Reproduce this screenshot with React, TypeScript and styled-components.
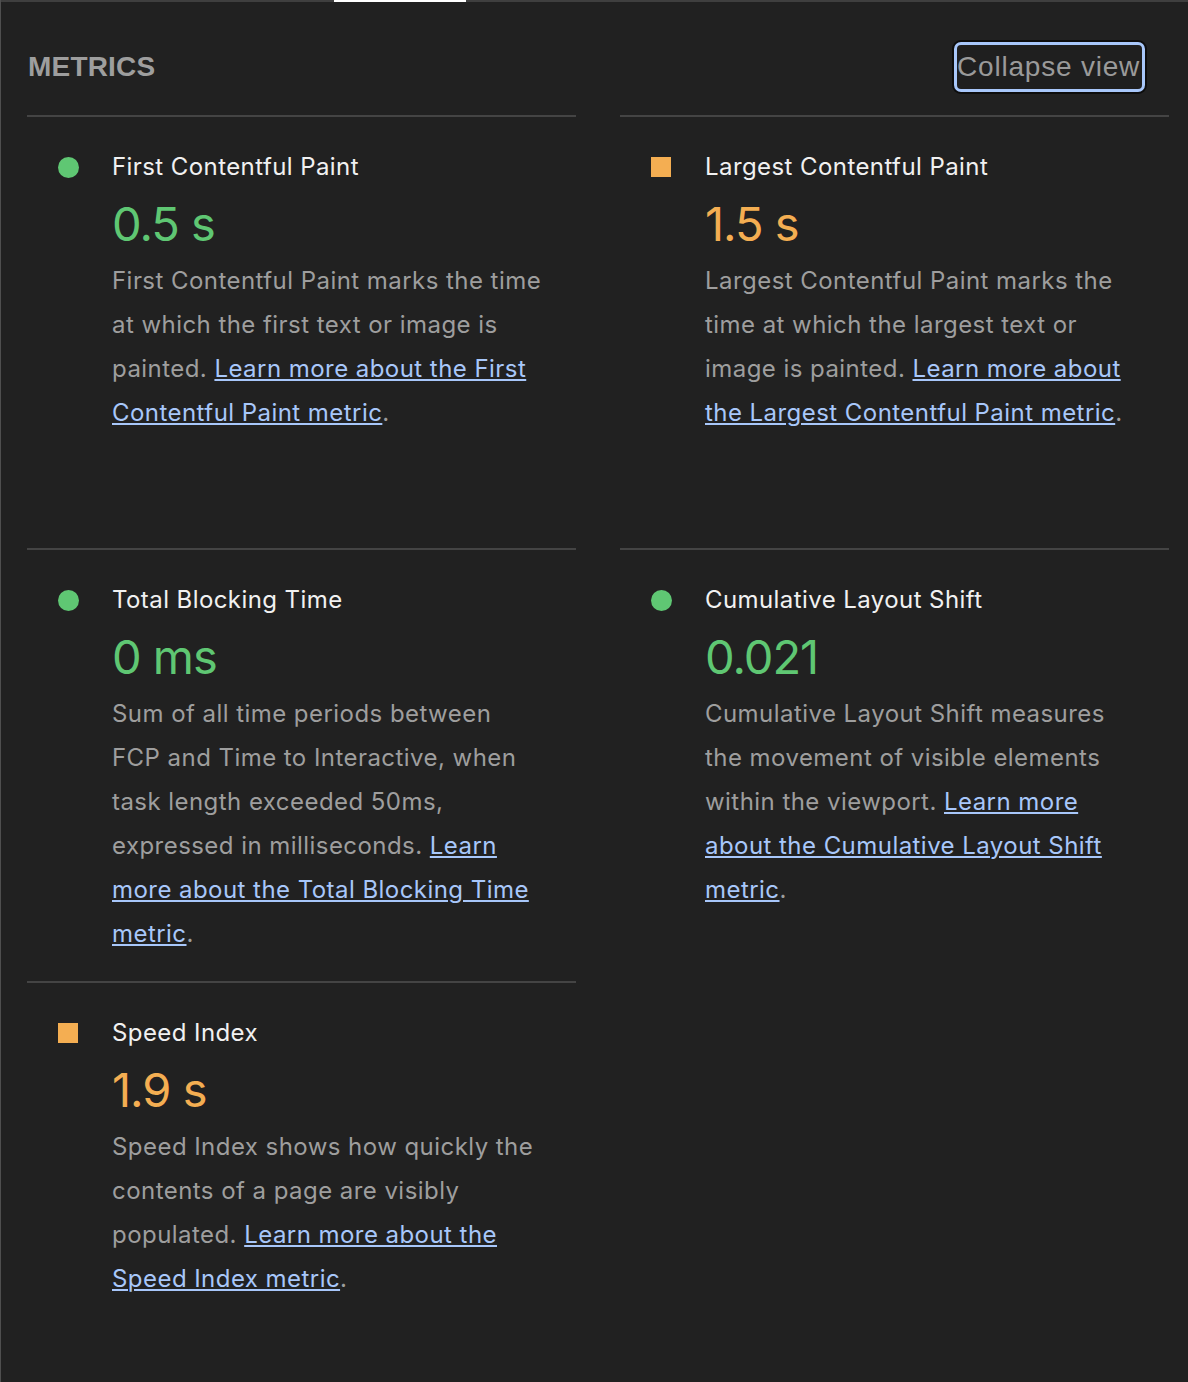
import React from "react";
import { createGlobalStyle, styled } from "styled-components";

type Rating = "pass" | "average";

type Metric = {
  title: string;
  value: string;
  rating: Rating;
  text: string;
  link: string;
};

const metrics: Metric[] = [
  {
    title: "First Contentful Paint",
    value: "0.5 s",
    rating: "pass",
    text: "First Contentful Paint marks the time at which the first text or image is painted.",
    link: "Learn more about the First Contentful Paint metric",
  },
  {
    title: "Largest Contentful Paint",
    value: "1.5 s",
    rating: "average",
    text: "Largest Contentful Paint marks the time at which the largest text or image is painted.",
    link: "Learn more about the Largest Contentful Paint metric",
  },
  {
    title: "Total Blocking Time",
    value: "0 ms",
    rating: "pass",
    text: "Sum of all time periods between FCP and Time to Interactive, when task length exceeded 50ms, expressed in milliseconds.",
    link: "Learn more about the Total Blocking Time metric",
  },
  {
    title: "Cumulative Layout Shift",
    value: "0.021",
    rating: "pass",
    text: "Cumulative Layout Shift measures the movement of visible elements within the viewport.",
    link: "Learn more about the Cumulative Layout Shift metric",
  },
  {
    title: "Speed Index",
    value: "1.9 s",
    rating: "average",
    text: "Speed Index shows how quickly the contents of a page are visibly populated.",
    link: "Learn more about the Speed Index metric",
  },
];

const colors: Record<Rating, string> = {
  pass: "#5fc773",
  average: "#f4ae52",
};

const App = () => {
  return (
    <Page>
      <GlobalStyle />
      <TabStrip>
        <TabIndicator />
      </TabStrip>
      <Section>
        <Header>
          <GroupTitle>Metrics</GroupTitle>
          <ToggleButton>Collapse view</ToggleButton>
        </Header>
        <MetricsGrid>
          {metrics.map((m) => (
            <MetricItem key={m.title}>
              <IconCell>
                <ScoreIcon $rating={m.rating} />
              </IconCell>
              <MetricTitle>{m.title}</MetricTitle>
              <MetricValue $rating={m.rating}>{m.value}</MetricValue>
              <Description>
                {m.text} <a href="#">{m.link}</a>.
              </Description>
            </MetricItem>
          ))}
        </MetricsGrid>
      </Section>
    </Page>
  );
};

const GlobalStyle = createGlobalStyle`
  html, body {
    margin: 0;
    padding: 0;
    background-color: #212121;
  }
  body {
    font-family: Inter, "Liberation Sans", Arial, sans-serif;
    -webkit-font-smoothing: antialiased;
  }
`;

const Page = styled.div`
  min-height: 100vh;
  box-sizing: border-box;
  background-color: #212121;
  border-left: 1px solid #4f4f4f;
`;

const TabStrip = styled.div`
  display: flex;
  height: 2px;
  background-color: #3f3f3f;
`;

const TabIndicator = styled.div`
  margin-left: 333px;
  width: 132px;
  background-color: #ffffff;
`;

const Section = styled.div`
  padding: 0 19px 0 26px;
`;

const Header = styled.div`
  display: flex;
  align-items: center;
  justify-content: space-between;
  box-sizing: border-box;
  height: 113px;
  padding: 16px 24px 0 1px;
`;

const GroupTitle = styled.div`
  font-family: "Liberation Sans", Arial, sans-serif;
  font-size: 28px;
  font-weight: 700;
  letter-spacing: 0.2px;
  text-transform: uppercase;
  color: #9e9e9e;
`;

const ToggleButton = styled.button`
  box-sizing: border-box;
  width: 191px;
  height: 50px;
  padding: 0;
  border: 3px solid #a8c7fa;
  border-radius: 7px;
  box-shadow: 0 0 0 2px #0d0d0d;
  background-color: #1f1f1f;
  color: #9a9a9a;
  font-family: "Liberation Sans", Arial, sans-serif;
  font-size: 28px;
  letter-spacing: 0.8px;
  white-space: nowrap;
  overflow: hidden;
  text-align: left;
  cursor: pointer;
`;

const MetricsGrid = styled.div`
  display: grid;
  grid-template-columns: 1fr 1fr;
  grid-auto-rows: 1fr;
  column-gap: 44px;
`;

const MetricItem = styled.div`
  display: grid;
  grid-template-columns: 85px 1fr;
  align-content: start;
  border-top: 2px solid #444444;
  padding: 28px 33px 25px 0;
`;

const IconCell = styled.div`
  display: flex;
  align-items: center;
  height: 44px;
  padding-left: 31px;
`;

const ScoreIcon = styled.span<{ $rating: Rating }>`
  display: block;
  width: ${(p) => (p.$rating === "pass" ? "21px" : "20px")};
  height: ${(p) => (p.$rating === "pass" ? "21px" : "20px")};
  border-radius: ${(p) => (p.$rating === "pass" ? "50%" : "0")};
  background-color: ${(p) => colors[p.$rating]};
`;

const MetricTitle = styled.div`
  font-size: 24px;
  line-height: 44px;
  letter-spacing: 0.42px;
  color: #f1f1f1;
`;

const MetricValue = styled.div<{ $rating: Rating }>`
  grid-column: 2;
  font-size: 47px;
  line-height: 70px;
  letter-spacing: -1px;
  color: ${(p) => colors[p.$rating]};
`;

const Description = styled.div`
  grid-column: 2;
  font-size: 24px;
  line-height: 44px;
  letter-spacing: 0.45px;
  color: #9e9e9e;

  a {
    color: #a8c7fa;
    text-decoration: underline;
    text-decoration-thickness: 2px;
    text-underline-offset: 2px;
  }
`;

export default App;
